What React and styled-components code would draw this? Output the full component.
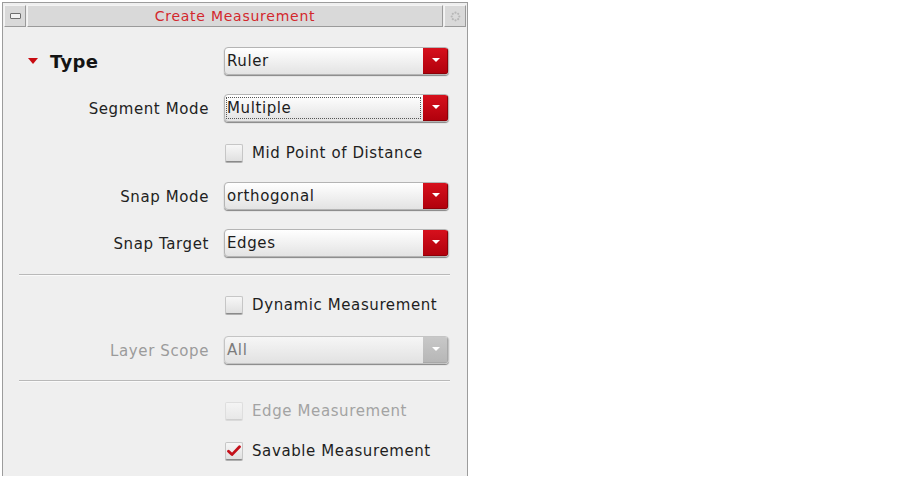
import React from "react";
import styled, { createGlobalStyle } from "styled-components";

const GlobalStyle = createGlobalStyle`
  html, body {
    margin: 0;
    padding: 0;
    background: #ffffff;
  }
  body {
    font-family: "DejaVu Sans", "Liberation Sans", sans-serif;
  }
`;

const Page = styled.div`
  width: 913px;
  height: 484px;
  padding: 2px 0 0 2px;
  box-sizing: border-box;
`;

const Panel = styled.div`
  width: 466px;
  height: 474px;
  box-sizing: border-box;
  border: 1px solid #9c9c9c;
  border-bottom: none;
  background: #efefef;
  padding: 2px 1px 0 1px;
  display: flex;
  flex-direction: column;
`;

const TitleBar = styled.div`
  display: flex;
  height: 22px;
  gap: 1px;
`;

const TitleButton = styled.div`
  width: 22px;
  flex: none;
  box-sizing: border-box;
  background: #d9d9d9;
  border: 1px solid;
  border-color: #f4f4f4 #9a9a9a #9a9a9a #f4f4f4;
  display: flex;
  align-items: center;
  justify-content: center;
`;

const TitleText = styled.div`
  flex: 1;
  box-sizing: border-box;
  background: #d9d9d9;
  border: 1px solid;
  border-color: #f4f4f4 #9a9a9a #9a9a9a #f4f4f4;
  color: #d3272c;
  font-size: 14px;
  letter-spacing: 0.75px;
  display: flex;
  align-items: center;
  justify-content: center;
`;

const MinBar = styled.div`
  width: 9px;
  height: 4px;
  border: 1px solid #6e6e6e;
  border-radius: 1px;
  background: #f2f2f2;
`;

const Form = styled.div`
  display: flex;
  flex-direction: column;
`;

const Row = styled.div`
  display: grid;
  grid-template-columns: 205px 225px;
  column-gap: 15px;
  align-items: center;
  height: ${(p) => p.$h}px;
  margin-top: ${(p) => p.$mt}px;
`;

const Label = styled.div`
  text-align: right;
  font-size: 15px;
  letter-spacing: 0.6px;
  color: ${(p) => (p.$disabled ? "#9b9b9b" : "#222222")};
  white-space: nowrap;
`;

const SectionHead = styled.div`
  display: flex;
  align-items: center;
  padding-left: 24px;
  gap: 12px;
`;

const Expander = styled.div`
  width: 0;
  height: 0;
  border-left: 5px solid transparent;
  border-right: 5px solid transparent;
  border-top: 6px solid #c80a10;
  margin-top: -2px;
`;

const HeadText = styled.div`
  font-size: 18px;
  font-weight: bold;
  letter-spacing: 0.3px;
  color: #141414;
`;

const Combo = styled.div`
  display: flex;
  height: 28px;
  box-sizing: border-box;
  border: 1px solid ${(p) => (p.$disabled ? "#c4c4c4" : "#b4b4b4")};
  border-radius: 4px;
  box-shadow: 0 1px 1px rgba(0, 0, 0, 0.45);
  overflow: hidden;
  background: ${(p) =>
    p.$disabled
      ? "linear-gradient(#f6f6f6, #e2e2e2)"
      : "linear-gradient(#ffffff, #e3e3e3)"};
  margin-top: -2px;
`;

const ComboValue = styled.div`
  flex: 1;
  display: flex;
  align-items: center;
  padding-left: 2px;
  font-size: 15px;
  letter-spacing: 0.6px;
  color: ${(p) => (p.$disabled ? "#7c7c7c" : "#1c1c1c")};
  position: relative;
`;

const FocusRing = styled.div`
  position: absolute;
  inset: 2px 2px 2px 1px;
  border: 1px dotted #555;
  pointer-events: none;
`;

const ComboArrow = styled.div`
  width: 25px;
  flex: none;
  display: flex;
  align-items: center;
  justify-content: center;
  background: ${(p) =>
    p.$disabled
      ? "linear-gradient(#c8c8c8, #b6b6b6)"
      : "linear-gradient(#d6101c, #b0000c)"};
  box-shadow: inset -1px -1px 0 ${(p) => (p.$disabled ? "#a8a8a8" : "#8c0008")};
`;

const ArrowGlyph = styled.div`
  width: 0;
  height: 0;
  border-left: 4px solid transparent;
  border-right: 4px solid transparent;
  border-top: 4px solid #ffffff;
  margin-top: -1px;
`;

const CheckRow = styled.div`
  display: flex;
  align-items: center;
  gap: 9px;
  padding-left: 1px;
`;

const Box = styled.div`
  width: 18px;
  height: 18px;
  box-sizing: border-box;
  flex: none;
  border: 1px solid ${(p) => (p.$disabled ? "#dedede" : "#c6c6c6")};
  border-bottom-color: ${(p) => (p.$disabled ? "#cfcfcf" : "#8a8a8a")};
  border-radius: 2px;
  background: ${(p) =>
    p.$disabled
      ? "linear-gradient(#f4f4f4, #e8e8e8)"
      : "linear-gradient(#f7f7f7, #e0e0e0)"};
  box-shadow: 0 1px 0 ${(p) => (p.$disabled ? "#dadada" : "#b0b0b0")};
  display: flex;
  align-items: center;
  justify-content: center;
`;

const CheckText = styled.div`
  font-size: 15px;
  letter-spacing: 0.6px;
  color: ${(p) => (p.$disabled ? "#a3a3a3" : "#1e1e1e")};
  white-space: nowrap;
`;

const Separator = styled.div`
  height: 1px;
  margin: ${(p) => p.$mt}px 16px 0 15px;
  background: #b9b9b9;
  border-bottom: 1px solid #fafafa;
`;

const Spinner = () => (
  <svg width="11" height="11" viewBox="0 0 11 11">
    {[0, 45, 90, 135, 180, 225, 270, 315].map((a) => {
      const r = (a * Math.PI) / 180;
      return (
        <circle
          key={a}
          cx={5.5 + 3.8 * Math.cos(r)}
          cy={5.5 + 3.8 * Math.sin(r)}
          r="1.1"
          fill="#b8b8b8"
        />
      );
    })}
  </svg>
);

const Check = () => (
  <svg width="14" height="12" viewBox="0 0 14 12">
    <path
      d="M1.5 6.2 L5 9.6 L12.5 1.8"
      fill="none"
      stroke="#c4101a"
      strokeWidth="2.8"
      strokeLinecap="round"
      strokeLinejoin="round"
    />
  </svg>
);

const Select = ({ value, disabled, focused }) => (
  <Combo $disabled={disabled}>
    <ComboValue $disabled={disabled}>
      {focused && <FocusRing />}
      {value}
    </ComboValue>
    <ComboArrow $disabled={disabled}>
      <ArrowGlyph />
    </ComboArrow>
  </Combo>
);

const Checkbox = ({ label, checked, disabled }) => (
  <CheckRow>
    <Box $disabled={disabled}>{checked && <Check />}</Box>
    <CheckText $disabled={disabled}>{label}</CheckText>
  </CheckRow>
);

const App = () => {
  return (
    <>
      <GlobalStyle />
      <Page>
        <Panel>
          <TitleBar>
            <TitleButton>
              <MinBar />
            </TitleButton>
            <TitleText>Create Measurement</TitleText>
            <TitleButton>
              <Spinner />
            </TitleButton>
          </TitleBar>
          <Form>
            <Row $h={29} $mt={20}>
              <SectionHead>
                <Expander />
                <HeadText>Type</HeadText>
              </SectionHead>
              <Select value="Ruler" />
            </Row>
            <Row $h={29} $mt={18}>
              <Label>Segment Mode</Label>
              <Select value="Multiple" focused />
            </Row>
            <Row $h={20} $mt={20}>
              <div />
              <Checkbox label="Mid Point of Distance" />
            </Row>
            <Row $h={29} $mt={19}>
              <Label>Snap Mode</Label>
              <Select value="orthogonal" />
            </Row>
            <Row $h={29} $mt={18}>
              <Label>Snap Target</Label>
              <Select value="Edges" />
            </Row>
            <Separator $mt={16} />
            <Row $h={20} $mt={19}>
              <div />
              <Checkbox label="Dynamic Measurement" />
            </Row>
            <Row $h={29} $mt={21}>
              <Label $disabled>Layer Scope</Label>
              <Select value="All" disabled />
            </Row>
            <Separator $mt={15} />
            <Row $h={20} $mt={19}>
              <div />
              <Checkbox label="Edge Measurement" disabled />
            </Row>
            <Row $h={20} $mt={20}>
              <div />
              <Checkbox label="Savable Measurement" checked />
            </Row>
          </Form>
        </Panel>
      </Page>
    </>
  );
};

export default App;
